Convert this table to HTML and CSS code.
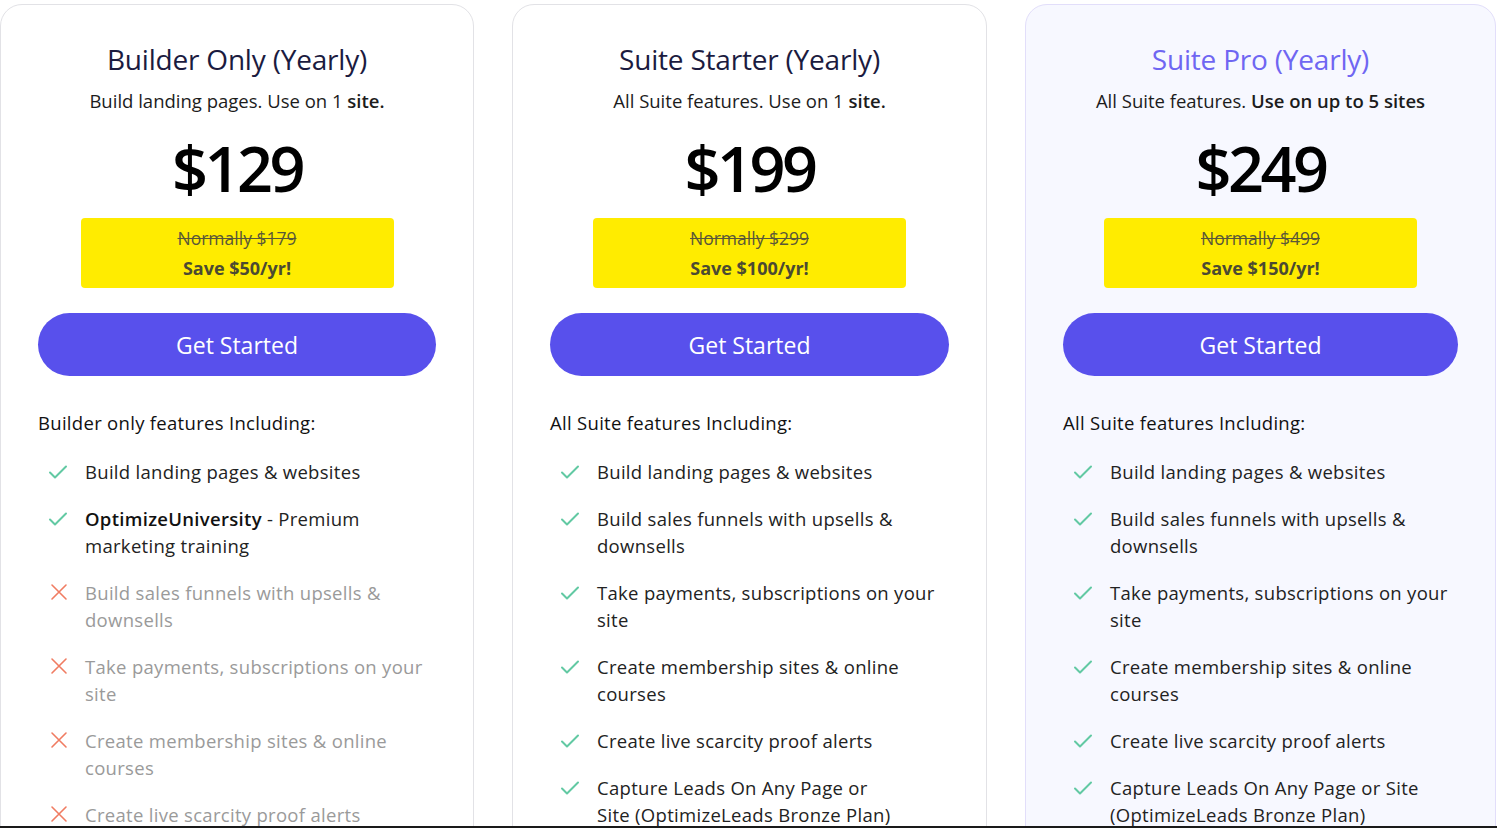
FILE: index.html
```html
<!DOCTYPE html>
<html lang="en">
<head>
    <meta charset="UTF-8">
    <title>Pricing</title>
    <link rel="stylesheet" href="styles.css">
</head>
<body>
<div class="page">
    <div class="plans">
        <div class="plan">
            <h2 class="plan-title">Builder Only (Yearly)</h2>
            <p class="plan-sub">Build landing pages. Use on 1 <b>site.</b></p>
            <div class="price">$129</div>
            <div class="deal">
                <s>Normally $179</s>
                <strong>Save $50/yr!</strong>
            </div>
            <button class="cta">Get Started</button>
            <p class="features-head">Builder only features Including:</p>
            <ul class="features">
                <li class="yes"><span class="ico"></span><span>Build landing pages &amp; websites</span></li>
                <li class="yes"><span class="ico"></span><span class="txt"><b>OptimizeUniversity</b> - Premium marketing training</span></li>
                <li class="no"><span class="ico"></span><span>Build sales funnels with upsells &amp; downsells</span></li>
                <li class="no"><span class="ico"></span><span>Take payments, subscriptions on your site</span></li>
                <li class="no"><span class="ico"></span><span>Create membership sites &amp; online courses</span></li>
                <li class="no"><span class="ico"></span><span>Create live scarcity proof alerts</span></li>
            </ul>
        </div>

        <div class="plan">
            <h2 class="plan-title">Suite Starter (Yearly)</h2>
            <p class="plan-sub">All Suite features. Use on 1 <b>site.</b></p>
            <div class="price">$199</div>
            <div class="deal">
                <s>Normally $299</s>
                <strong>Save $100/yr!</strong>
            </div>
            <button class="cta">Get Started</button>
            <p class="features-head">All Suite features Including:</p>
            <ul class="features">
                <li class="yes"><span class="ico"></span><span>Build landing pages &amp; websites</span></li>
                <li class="yes"><span class="ico"></span><span>Build sales funnels with upsells &amp; downsells</span></li>
                <li class="yes"><span class="ico"></span><span>Take payments, subscriptions on your site</span></li>
                <li class="yes"><span class="ico"></span><span>Create membership sites &amp; online courses</span></li>
                <li class="yes"><span class="ico"></span><span>Create live scarcity proof alerts</span></li>
                <li class="yes"><span class="ico"></span><span>Capture Leads On Any Page or<br>Site (OptimizeLeads Bronze Plan)</span></li>
            </ul>
        </div>

        <div class="plan plan-pro">
            <h2 class="plan-title">Suite Pro (Yearly)</h2>
            <p class="plan-sub">All Suite features. <b>Use on up to 5 sites</b></p>
            <div class="price">$249</div>
            <div class="deal">
                <s>Normally $499</s>
                <strong>Save $150/yr!</strong>
            </div>
            <button class="cta">Get Started</button>
            <p class="features-head">All Suite features Including:</p>
            <ul class="features">
                <li class="yes"><span class="ico"></span><span>Build landing pages &amp; websites</span></li>
                <li class="yes"><span class="ico"></span><span>Build sales funnels with upsells &amp; downsells</span></li>
                <li class="yes"><span class="ico"></span><span>Take payments, subscriptions on your site</span></li>
                <li class="yes"><span class="ico"></span><span>Create membership sites &amp; online courses</span></li>
                <li class="yes"><span class="ico"></span><span>Create live scarcity proof alerts</span></li>
                <li class="yes"><span class="ico"></span><span>Capture Leads On Any Page or Site (OptimizeLeads Bronze Plan)</span></li>
            </ul>
        </div>
    </div>
</div>
<div class="edge"></div>

<script>
    var check = '<svg width="20" height="14" viewBox="0 0 20 14"><path d="M2 7.5l5 5L18 1.5" fill="none" stroke="#62c9a3" stroke-width="2" stroke-linecap="round" stroke-linejoin="round"/></svg>';
    var cross = '<svg width="18" height="18" viewBox="0 0 18 18"><path d="M2 2l14 14M16 2L2 16" fill="none" stroke="#f07c62" stroke-width="1.6" stroke-linecap="round"/></svg>';
    document.querySelectorAll(".features li").forEach(function (li) {
        li.querySelector(".ico").innerHTML = li.classList.contains("yes") ? check : cross;
    });
</script>
</body>
</html>
```

FILE: styles.css
```css
body {
    margin: 0;
    background: #fff;
    font-family: "Open Sans", Arial, sans-serif;
    color: #1c1c1c;
}

.page {
    height: 826px;
    overflow: hidden;
}

.edge {
    height: 2px;
    background: #1a1a1a;
}

.plans {
    display: grid;
    grid-template-columns: 474px 475px 471px;
    gap: 38px;
    padding-top: 4px;
}

.plan {
    border: 1px solid #e2e2e6;
    border-radius: 22px;
    padding: 0 37px;
    height: 900px;
    text-align: center;
}

.plan-pro {
    background: #f7f8ff;
    border-color: #e2defa;
}

.plan-title {
    margin: 35px 0 0;
    font-size: 28px;
    font-weight: 500;
    line-height: 38px;
    color: #1b1b3f;
    letter-spacing: -0.2px;
}

.plan-pro .plan-title {
    color: #6f66f2;
}

.plan-sub {
    margin: 11px 0 0;
    font-size: 18.5px;
    line-height: 24px;
    color: #1c1c1c;
}

.plan-sub b {
    font-weight: 600;
}

.price {
    margin-top: 15px;
    font-size: 63px;
    font-weight: 600;
    line-height: 80px;
    color: #000;
    letter-spacing: -3.5px;
}

.deal {
    margin: 10px auto 0;
    width: 313px;
    height: 70px;
    background: #ffec00;
    border-radius: 4px;
    display: flex;
    flex-direction: column;
    justify-content: center;
    gap: 6px;
    font-size: 17.5px;
    line-height: 24px;
    color: #4b4a32;
}

.deal s {
    color: #5a5838;
}

.deal strong {
    font-weight: 700;
    font-size: 18px;
}

.cta {
    display: block;
    width: 100%;
    height: 63px;
    margin-top: 25px;
    border: none;
    border-radius: 32px;
    background: #5850ec;
    color: #fff;
    font-family: inherit;
    font-size: 23px;
    font-weight: 500;
    cursor: pointer;
}

.features-head {
    margin: 33px 0 0;
    text-align: left;
    font-size: 18.5px;
    font-weight: 500;
    line-height: 27px;
    color: #111;
    letter-spacing: 0.3px;
}

.features {
    list-style: none;
    margin: 22px 0 0;
    padding: 0;
    text-align: left;
    display: flex;
    flex-direction: column;
    gap: 20px;
}

.features li {
    display: flex;
    gap: 17px;
    font-size: 18.5px;
    line-height: 27px;
    letter-spacing: 0.3px;
    color: #222;
}

.features .ico {
    flex: none;
    width: 30px;
    display: flex;
    justify-content: flex-end;
    padding-top: 7px;
    height: 20px;
}

.features .no {
    color: #9a9a9a;
}

.features .no .ico {
    padding-top: 4px;
    justify-content: center;
    padding-left: 11px;
    width: 19px;
}

.features b {
    font-weight: 600;
    color: #111;
}
```
